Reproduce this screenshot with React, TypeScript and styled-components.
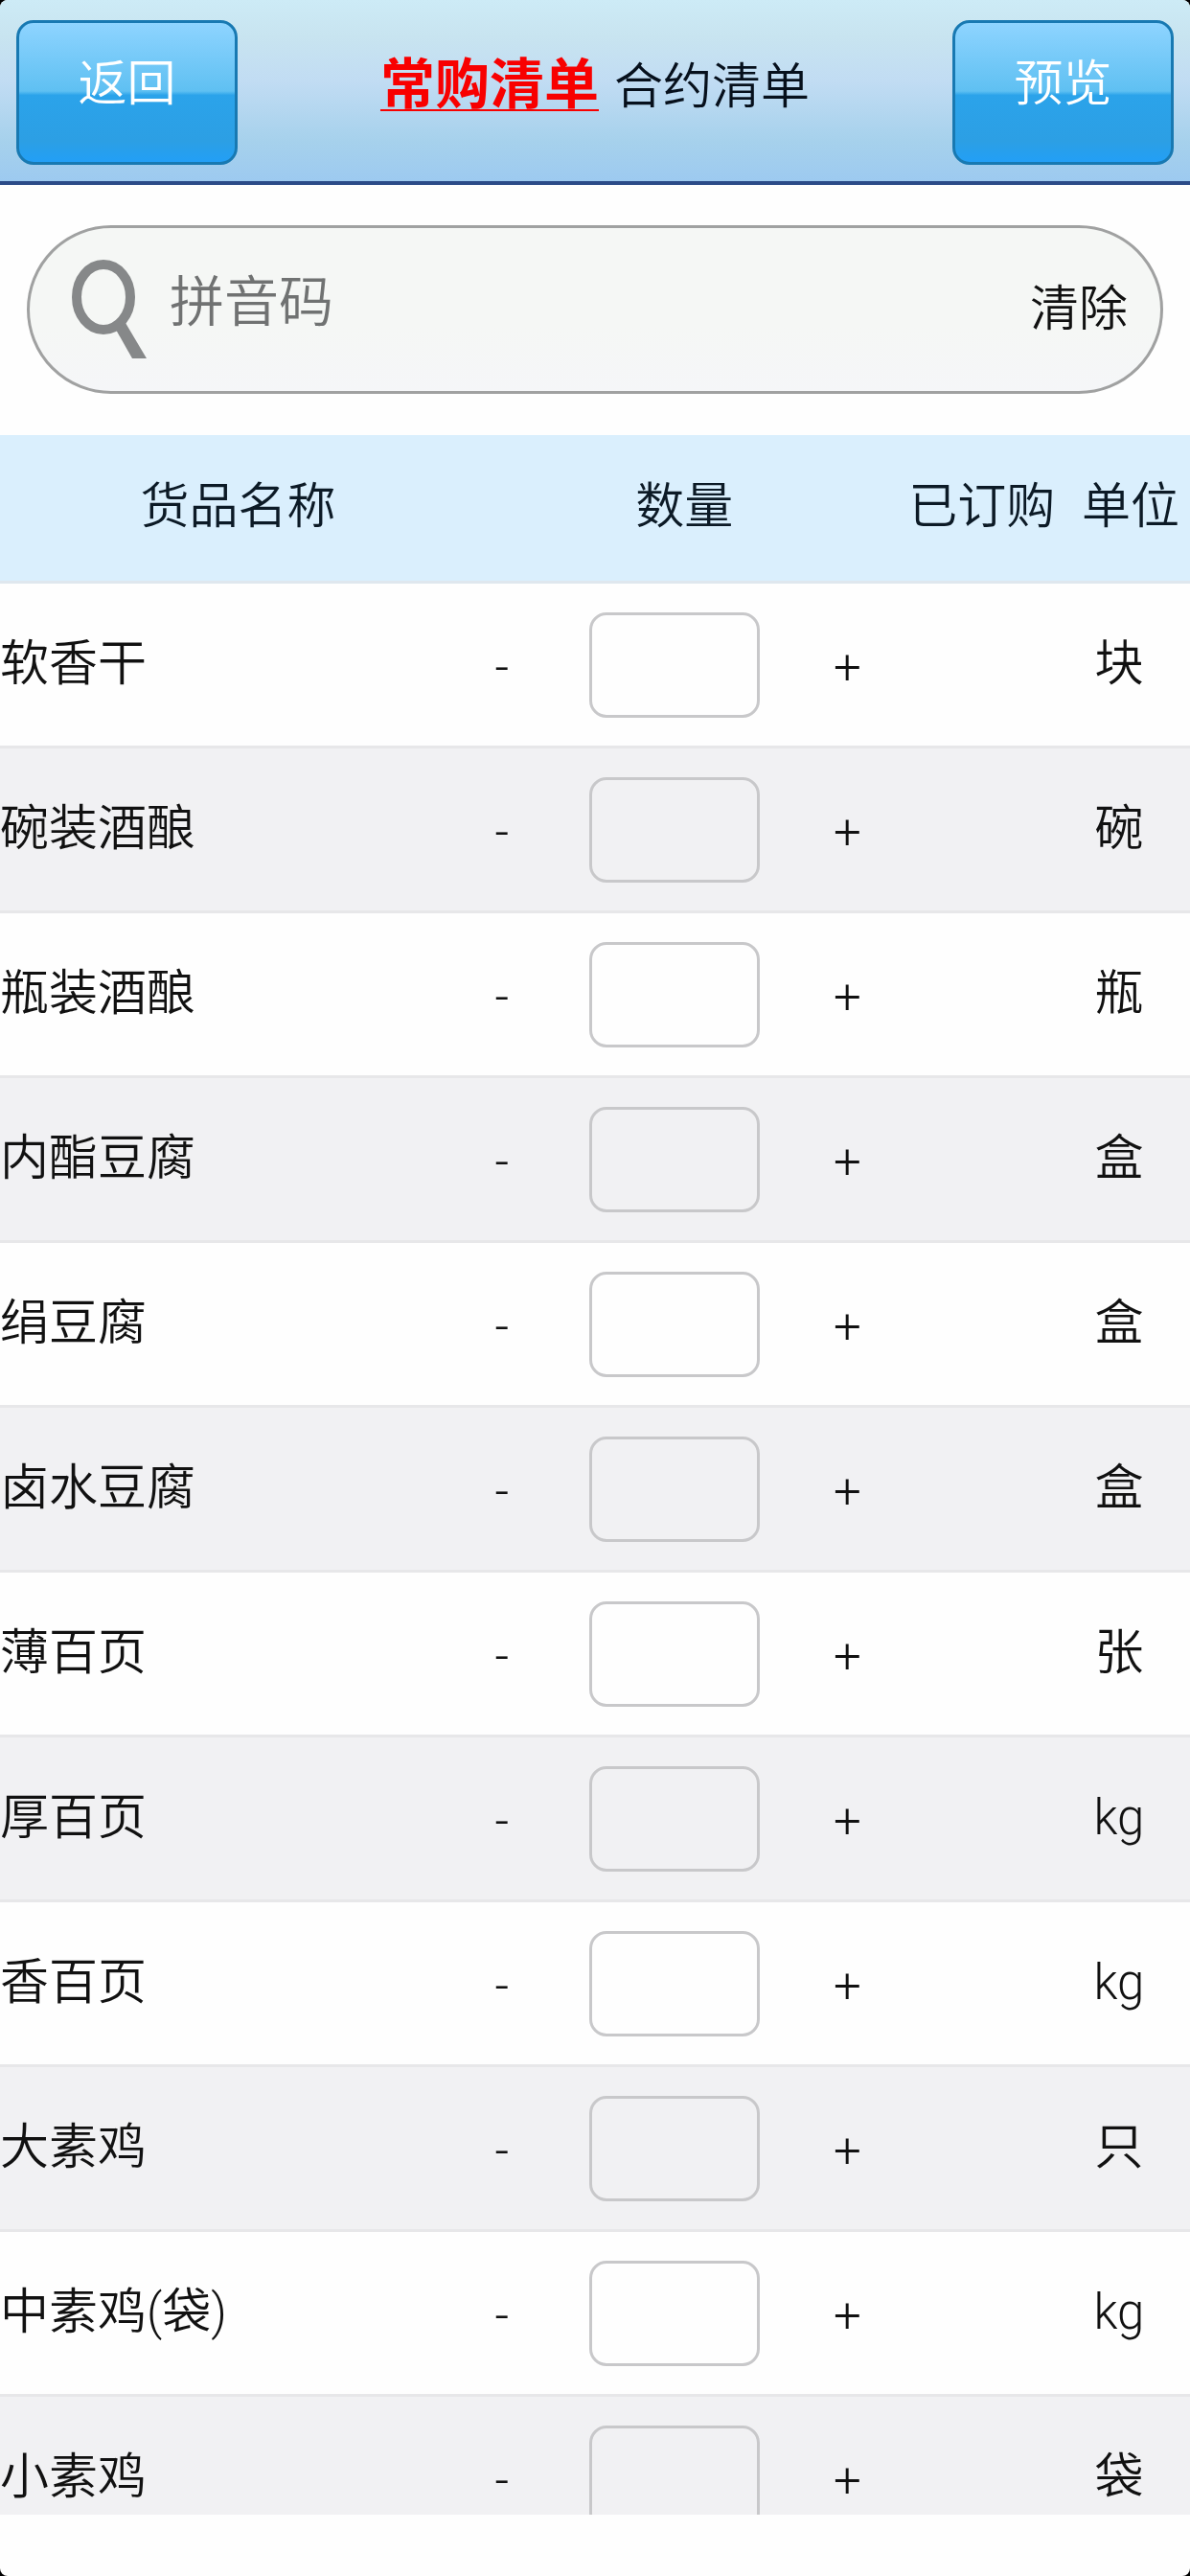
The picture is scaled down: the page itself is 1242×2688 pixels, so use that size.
import React, { useState } from 'react';
import styled, { createGlobalStyle } from 'styled-components';

const GlobalStyle = createGlobalStyle`
  *, *::before, *::after { box-sizing: border-box; }
  html { background: #000; }
  body { margin: 0; }
  body, button, input {
    font-family: Roboto, "Noto Sans CJK SC", sans-serif;
    font-weight: 350;
    font-size: 51px;
    line-height: 60px;
    color: #111;
  }
`;

const Page = styled.div`
  display: flex;
  flex-direction: column;
  height: 100vh;
  overflow: hidden;
  padding-bottom: 64px;
  border-radius: 8px;
  background: #fefefe;
`;

const TopBar = styled.header`
  flex: none;
  display: flex;
  align-items: flex-start;
  justify-content: space-between;
  padding: 21px 17px 17px;
  border-bottom: 4px solid #2b4b88;
  background: linear-gradient(#cdebf6 0%, #c8e4f0 20%, #c1dcf3 45%, #a6d1ec 78%, #9dcaf0 100%);
`;

const GlossyButton = styled.button`
  width: 231px;
  height: 151px;
  padding: 0 0 18px;
  border: 3px solid #1879b2;
  border-radius: 18px;
  background: linear-gradient(#8ed4ff 0%, #5fc0f2 49%, #2ba3ea 52%, #2c9fe4 85%, #229ff6 100%);
  color: #fff;
`;

const Tabs = styled.nav`
  display: flex;
  align-items: baseline;
  gap: 16px;
  padding-top: 38px;
`;

const Tab = styled.a<{ $active?: boolean }>`
  color: ${(p) => (p.$active ? '#f80000' : '#06101c')};
  font-size: ${(p) => (p.$active ? '57px' : '51px')};
  font-weight: ${(p) => (p.$active ? 700 : 350)};
  text-decoration: ${(p) => (p.$active ? 'underline' : 'none')};
  text-decoration-thickness: 2px;
  text-underline-offset: 6px;
  text-decoration-skip-ink: none;
`;

const SearchForm = styled.form`
  flex: none;
  display: flex;
  align-items: center;
  height: 176px;
  margin: 42px 28px 43px;
  padding: 0 34px 0 44px;
  border: 3px solid #a0a1a1;
  border-radius: 88px;
  background: linear-gradient(#f5f7f5 60%, #f5f6f8 100%);
`;

const SearchIcon = styled.svg`
  flex: none;
  width: 78px;
  height: 105px;
`;

const SearchInput = styled.input`
  flex: 1;
  min-width: 0;
  height: 80px;
  margin-bottom: 16px;
  padding: 0 24px;
  border: 0;
  outline: 0;
  background: transparent;
  font-size: 57px;
  &::placeholder { color: #707272; opacity: 1; }
`;

const PlainButton = styled.button`
  flex: none;
  min-width: 54px;
  padding: 0;
  border: 0;
  background: transparent;
`;

const StepButton = styled(PlainButton)`
  padding-top: 6px;
`;

const List = styled.main`
  flex: 1;
  min-height: 0;
  overflow-y: auto;
  scrollbar-width: none;
`;

const Table = styled.table`
  width: 100%;
  table-layout: fixed;
  border-collapse: separate;
  border-spacing: 0;
`;

const NameCol = styled.col`width: 40%;`;
const QtyCol = styled.col`width: 35%;`;
const OrderedCol = styled.col`width: 15%;`;
const UnitCol = styled.col`width: 10%;`;

const HeadCell = styled.th`
  height: 155px;
  padding: 0 0 2px;
  border-bottom: 3px solid #dfe7ee;
  background: #daeffd;
  color: #0c1a26;
  font-weight: 350;
  white-space: nowrap;
`;

const Row = styled.tr`
  background: #fefefe;
  &:nth-child(even) { background: #f1f1f3; }
`;

const Cell = styled.td`
  height: 172px;
  padding: 0;
  border-bottom: 3px solid #e7e7e9;
  white-space: nowrap;
`;

const NameCell = styled(Cell)`
  padding-bottom: 2px;
`;

const UnitCell = styled(Cell)`
  padding: 0 24px 2px 0;
  text-align: center;
`;

const Stepper = styled.div`
  display: flex;
  align-items: center;
  justify-content: space-between;
  padding-right: 20px;
`;

const QtyInput = styled.input`
  width: 178px;
  height: 110px;
  padding: 0 12px;
  border: 3px solid #c8c8ca;
  border-radius: 18px;
  outline: 0;
  background: transparent;
  text-align: center;
`;

const items = [
  { name: '软香干', unit: '块' },
  { name: '碗装酒酿', unit: '碗' },
  { name: '瓶装酒酿', unit: '瓶' },
  { name: '内酯豆腐', unit: '盒' },
  { name: '绢豆腐', unit: '盒' },
  { name: '卤水豆腐', unit: '盒' },
  { name: '薄百页', unit: '张' },
  { name: '厚百页', unit: 'kg' },
  { name: '香百页', unit: 'kg' },
  { name: '大素鸡', unit: '只' },
  { name: '中素鸡(袋)', unit: 'kg' },
  { name: '小素鸡', unit: '袋' },
];

function ItemRow({ name, unit }: { name: string; unit: string }) {
  const [qty, setQty] = useState('');
  const step = (by: number) => {
    const next = Math.max(0, (Number(qty) || 0) + by);
    setQty(next === 0 ? '' : String(next));
  };
  return (
    <Row>
      <NameCell>{name}</NameCell>
      <Cell>
        <Stepper>
          <StepButton type="button" onClick={() => step(-1)}>-</StepButton>
          <QtyInput
            aria-label={name}
            inputMode="decimal"
            value={qty}
            onChange={(e) => setQty(e.target.value)}
          />
          <StepButton type="button" onClick={() => step(1)}>+</StepButton>
        </Stepper>
      </Cell>
      <Cell />
      <UnitCell>{unit}</UnitCell>
    </Row>
  );
}

export default function App() {
  const [query, setQuery] = useState('');
  return (
    <>
      <GlobalStyle />
      <Page>
        <TopBar>
          <GlossyButton type="button">返回</GlossyButton>
          <Tabs>
            <Tab href="#regular" $active>常购清单</Tab>
            <Tab href="#contract">合约清单</Tab>
          </Tabs>
          <GlossyButton type="button">预览</GlossyButton>
        </TopBar>
        <SearchForm role="search" onSubmit={(e) => e.preventDefault()}>
          <SearchIcon viewBox="0 0 78 105" aria-hidden="true">
            <ellipse cx="33" cy="39" rx="28" ry="34" fill="none" stroke="#868889" strokeWidth="10" />
            <path d="M46 73 L56 66 L78 103 H63 Z" fill="#868889" />
          </SearchIcon>
          <SearchInput
            aria-label="拼音码"
            placeholder="拼音码"
            value={query}
            onChange={(e) => setQuery(e.target.value)}
          />
          <PlainButton type="button" onClick={() => setQuery('')}>清除</PlainButton>
        </SearchForm>
        <List>
          <Table>
            <colgroup>
              <NameCol />
              <QtyCol />
              <OrderedCol />
              <UnitCol />
            </colgroup>
            <thead>
              <tr>
                <HeadCell scope="col">货品名称</HeadCell>
                <HeadCell scope="col">数量</HeadCell>
                <HeadCell scope="col">已订购</HeadCell>
                <HeadCell scope="col">单位</HeadCell>
              </tr>
            </thead>
            <tbody>
              {items.map((item) => (
                <ItemRow key={item.name} {...item} />
              ))}
            </tbody>
          </Table>
        </List>
      </Page>
    </>
  );
}
